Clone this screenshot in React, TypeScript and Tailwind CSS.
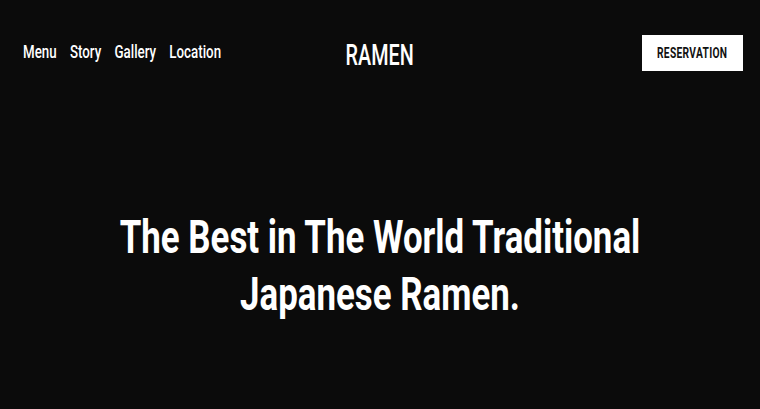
export default function App() {
  const font = { fontFamily: 'Roboto, "Liberation Sans", Arial, sans-serif' };

  return (
    <div className="flex h-[409px] w-full flex-col overflow-hidden bg-[#0b0b0b] text-white" style={font}>
      <header className="grid h-[71px] grid-cols-[minmax(0,1fr)_auto_minmax(0,1fr)] items-start px-[17px] pt-[35px]">
        <nav className="ml-[6px] mt-[8px] flex origin-left scale-x-[0.74] gap-[18px] whitespace-nowrap text-[18px] font-medium leading-none">
          <a href="#">Menu</a>
          <a href="#">Story</a>
          <a href="#">Gallery</a>
          <a href="#">Location</a>
        </nav>
        <div className="mt-[5px] scale-x-[0.66] text-[30px] font-medium leading-none">RAMEN</div>
        <div className="flex justify-end">
          <button className="flex h-[36px] w-[101px] items-center justify-center bg-white text-[#111]">
            <span className="scale-x-[0.73] whitespace-nowrap text-[14px] font-bold leading-none tracking-[0.03em]">
              RESERVATION
            </span>
          </button>
        </div>
      </header>

      <main className="mt-[138px]">
        <h1 className="scale-x-[0.758] text-center text-[46px] font-bold leading-[57px]">
          The Best in The World Traditional
          <br />
          Japanese Ramen.
        </h1>
      </main>
    </div>
  );
}
